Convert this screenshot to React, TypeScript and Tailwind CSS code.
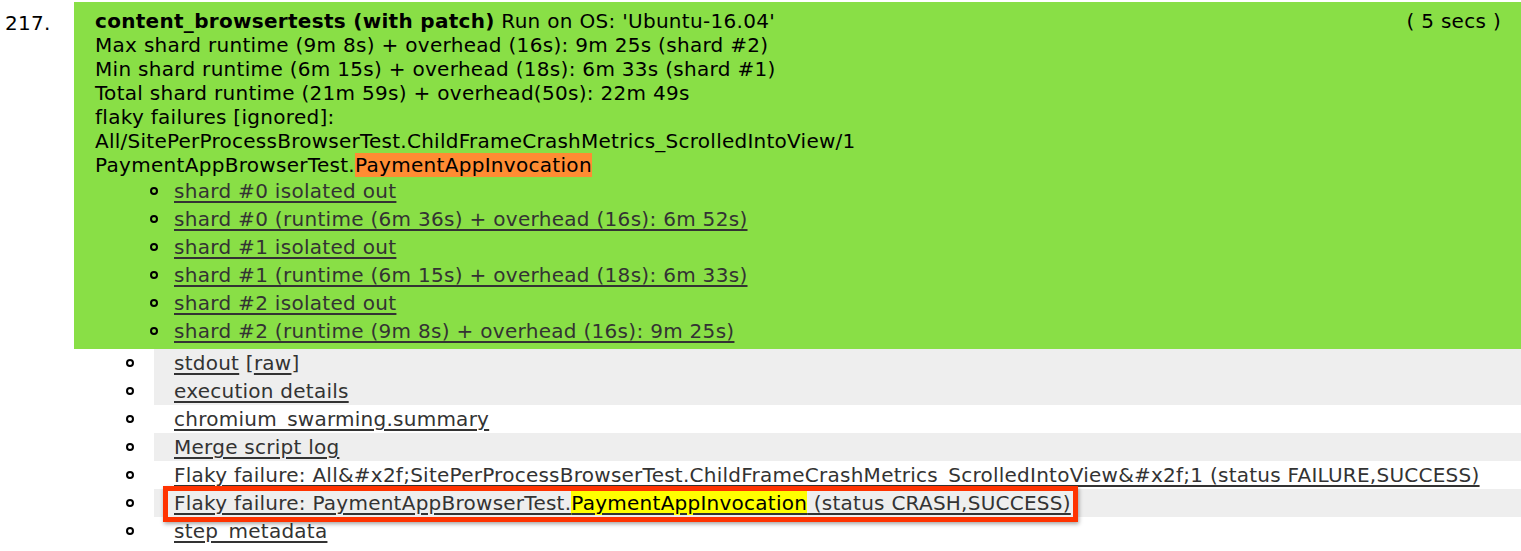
import React from "react";

const shards = [
  "shard #0 isolated out",
  "shard #0 (runtime (6m 36s) + overhead (16s): 6m 52s)",
  "shard #1 isolated out",
  "shard #1 (runtime (6m 15s) + overhead (18s): 6m 33s)",
  "shard #2 isolated out",
  "shard #2 (runtime (9m 8s) + overhead (16s): 9m 25s)",
];

function Bullet() {
  return <span className="w-[8px] h-[8px] rounded-full border-2 border-black shrink-0" />;
}

function Row({ gray, children }: { gray?: boolean; children: React.ReactNode }) {
  return (
    <li className="flex items-center h-[28px]">
      <div className="w-[154px] shrink-0 flex justify-end pr-[20px]">
        <Bullet />
      </div>
      <div className={"flex-1 h-full flex items-center pl-[20px] whitespace-nowrap tracking-[0.25px] " + (gray ? "bg-[#eeeeee]" : "")}>
        {children}
      </div>
    </li>
  );
}

const link = "underline decoration-2 underline-offset-[3px] text-[#333]";

export default function App() {
  return (
    <div className="w-[1521px] h-[551px] bg-white text-black text-[20px] tracking-[0.3px] leading-[24px] font-['DejaVu_Sans',Verdana,sans-serif] overflow-hidden">
      <div className="flex pt-[2px]">
        <div className="w-[74px] shrink-0 pl-[5px] pt-[9px]">217.</div>
        <div className="flex-1 bg-[#89df46] pl-[21px] pr-[20px] pt-[7px] pb-[4px] whitespace-nowrap">
          <div className="flex justify-between">
            <div>
              <span className="font-bold tracking-[0.3px]">content_browsertests (with patch)</span> Run on OS: 'Ubuntu-16.04'
            </div>
            <div>( 5 secs )</div>
          </div>
          <div>Max shard runtime (9m 8s) + overhead (16s): 9m 25s (shard #2)</div>
          <div>Min shard runtime (6m 15s) + overhead (18s): 6m 33s (shard #1)</div>
          <div>Total shard runtime (21m 59s) + overhead(50s): 22m 49s</div>
          <div>flaky failures [ignored]:</div>
          <div className="tracking-[0.25px]">All/SitePerProcessBrowserTest.ChildFrameCrashMetrics_ScrolledIntoView/1</div>
          <div>
            PaymentAppBrowserTest.<span className="bg-[#ff8c33]">PaymentAppInvocation</span>
          </div>
          <ul>
            {shards.map((s) => (
              <li key={s} className="flex items-center h-[28px]">
                <div className="w-[79px] shrink-0 flex justify-end pr-[16px]">
                  <Bullet />
                </div>
                <a className={link}>{s}</a>
              </li>
            ))}
          </ul>
        </div>
      </div>
      <ul>
        <Row gray>
          <a className={link}>stdout</a>
          <span className="text-[#333]">&nbsp;[</span>
          <a className={link}>raw</a>
          <span className="text-[#333]">]</span>
        </Row>
        <Row gray>
          <a className={link}>execution details</a>
        </Row>
        <Row>
          <a className={link}>chromium_swarming.summary</a>
        </Row>
        <Row gray>
          <a className={link}>Merge script log</a>
        </Row>
        <Row>
          <a className={link}>
            Flaky failure: All&amp;#x2f;SitePerProcessBrowserTest.ChildFrameCrashMetrics_ScrolledIntoView&amp;#x2f;1 (status FAILURE,SUCCESS)
          </a>
        </Row>
        <Row gray>
          <span className="relative">
            <a className={link}>
              Flaky failure: PaymentAppBrowserTest.<span className="bg-[#ffff00] text-black">PaymentAppInvocation</span> (status CRASH,SUCCESS)
            </a>
            <span className="absolute left-[-11px] right-[-7px] top-[-5px] bottom-[-7px] border-[5px] border-[#ff3300] shadow-[1px_2px_4px_rgba(0,0,0,0.35)] pointer-events-none" />
          </span>
        </Row>
        <Row>
          <a className={link}>step_metadata</a>
        </Row>
      </ul>
    </div>
  );
}
